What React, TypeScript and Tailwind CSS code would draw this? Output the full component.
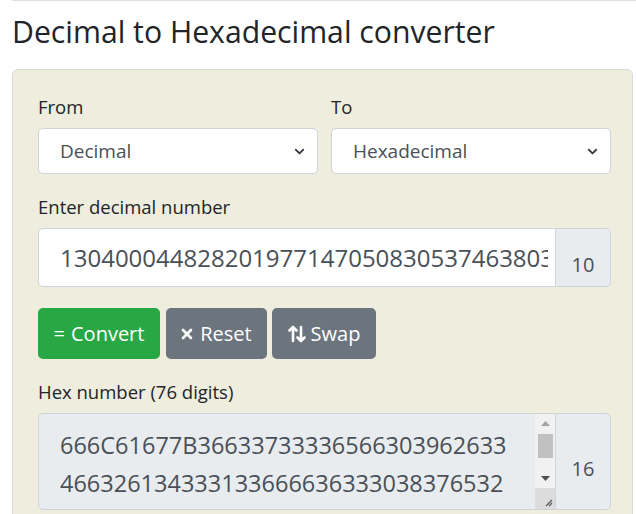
import { ChevronDown } from "lucide-react";

const font = { fontFamily: '"Open Sans", "Noto Sans", sans-serif' };

function Label({ children }: { children: React.ReactNode }) {
  return <div className="text-[18.5px] leading-[24px] text-[#212529] mb-[9px]">{children}</div>;
}

function Select({ value }: { value: string }) {
  return (
    <div className="h-[46px] bg-white border border-[#ced4da] rounded-[5px] flex items-center justify-between pl-[21px] pr-[10px] text-[19px] text-[#495057]">
      <span>{value}</span>
      <ChevronDown className="w-[15px] h-[15px] text-[#343a40]" strokeWidth={3} />
    </div>
  );
}

export default function App() {
  return (
    <div className="w-[636px] h-[514px] overflow-hidden bg-white" style={font}>
      <div className="ml-3 border-t border-[#dee2e6]" />
      <div className="pl-3 pr-[3px]">
        <h1 className="text-[30.2px] leading-[40px] text-[#212529] mt-[11px] mb-[17px] font-normal">
          Decimal to Hexadecimal converter
        </h1>

        <div className="bg-[#efeddd] border border-[#dcdad0] rounded-[6px] pl-[25px] pr-[21px] pt-[25px] pb-6">
          {/* From / To */}
          <div className="grid grid-cols-2 gap-[13px]">
            <div>
              <Label>From</Label>
              <Select value="Decimal" />
            </div>
            <div>
              <Label>To</Label>
              <Select value="Hexadecimal" />
            </div>
          </div>

          {/* decimal input */}
          <div className="mt-[21px]">
            <Label>Enter decimal number</Label>
            <div className="flex h-[59px]">
              <div className="flex-1 min-w-0 bg-white border border-[#ced4da] rounded-l-[5px] pl-[21px] pr-[7px] flex items-center">
                <div className="flex-1 min-w-0 overflow-hidden whitespace-nowrap text-[24px] text-[#495057]">
                  1304000448282019771470508305374638037165226319438751055426108927541493047116281873972
                </div>
              </div>
              <div className="w-[55px] bg-[#e9ecef] border border-l-0 border-[#ced4da] rounded-r-[5px] flex items-center justify-center pt-[14px] text-[20px] text-[#495057]">
                10
              </div>
            </div>
          </div>

          {/* buttons */}
          <div className="flex gap-[6px] mt-[21px]">
            <button className="h-[51px] w-[122px] rounded-[5px] bg-[#28a745] text-white text-[20px] flex items-center justify-center gap-[6px]">
              <span>=</span>
              <span>Convert</span>
            </button>
            <button className="h-[51px] w-[101px] rounded-[5px] bg-[#6c757d] text-white text-[20px] flex items-center justify-center gap-[7px]">
              <svg width="12" height="12" viewBox="0 0 12 12">
                <path d="M2 2 L10 10 M10 2 L2 10" stroke="white" strokeWidth="2.6" strokeLinecap="round" />
              </svg>
              <span>Reset</span>
            </button>
            <button className="h-[51px] w-[104px] rounded-[5px] bg-[#6c757d] text-white text-[20px] flex items-center justify-center gap-[5px] -ml-px">
              <svg width="18" height="20" viewBox="0 0 18 20">
                <path d="M5 17 V3 M1.5 6.5 L5 3 L8.5 6.5" stroke="white" strokeWidth="2.6" fill="none" strokeLinecap="round" strokeLinejoin="round" />
                <path d="M13 3 V17 M9.5 13.5 L13 17 L16.5 13.5" stroke="white" strokeWidth="2.6" fill="none" strokeLinecap="round" strokeLinejoin="round" />
              </svg>
              <span>Swap</span>
            </button>
          </div>

          {/* hex output */}
          <div className="mt-[21px]">
            <Label>Hex number (76 digits)</Label>
            <div className="flex h-[97px]">
              <div className="flex-1 min-w-0 bg-[#e9ecef] border border-[#ced4da] rounded-l-[5px] flex overflow-hidden">
                <div className="flex-1 min-w-0 pl-[21px] pt-[12px] text-[23.5px] leading-[38px] text-[#495057] whitespace-nowrap overflow-hidden">
                  <div>666C61677B36633733336566303962633</div>
                  <div>466326134333133666636333038376532</div>
                </div>
                <div className="w-[20px] shrink-0 bg-[#f1f1f1] flex flex-col items-center">
                  <div className="h-[20px] flex items-center justify-center">
                    <svg width="9" height="6" viewBox="0 0 9 6"><path d="M4.5 0 L9 5 H0 Z" fill="#a3a3a3" /></svg>
                  </div>
                  <div className="w-[15px] h-[24px] bg-[#c1c1c1]" />
                  <div className="flex-1" />
                  <div className="h-[18px] flex items-center justify-center">
                    <svg width="9" height="6" viewBox="0 0 9 6"><path d="M0 0 H9 L4.5 5 Z" fill="#505050" /></svg>
                  </div>
                  <div className="w-full h-[21px] bg-[#dcdcdc] flex items-end justify-end p-[2px]">
                    <svg width="10" height="10" viewBox="0 0 10 10">
                      <path d="M9 3 L3 9 M9 6 L6 9" stroke="#555" strokeWidth="1.2" />
                    </svg>
                  </div>
                </div>
              </div>
              <div className="w-[55px] bg-[#e9ecef] border border-l-0 border-[#ced4da] rounded-r-[5px] flex items-center justify-center pt-[14px] text-[20px] text-[#495057]">
                16
              </div>
            </div>
          </div>
        </div>
      </div>
    </div>
  );
}
